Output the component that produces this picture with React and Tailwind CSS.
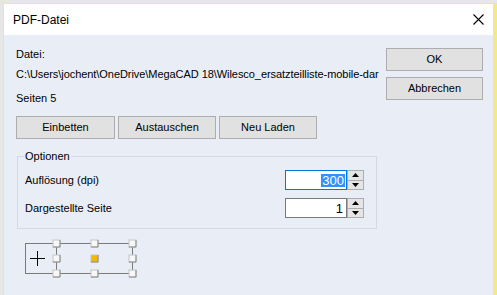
import React from "react";

const font = { fontFamily: '"Liberation Sans", Arial, sans-serif' };

const Btn = ({ children, className = "" }) => (
  <button
    className={
      "h-[23px] bg-[#e1e1e1] border border-[#adadad] text-[11px] text-black leading-none " +
      className
    }
  >
    {children}
  </button>
);

const Spin = () => (
  <div className="w-[17px] h-[20px] border border-[#adadad] bg-[#e5e5e5] flex flex-col">
    <div className="flex-1 flex items-center justify-center border-b border-[#adadad]">
      <svg width="7" height="4" viewBox="0 0 7 4">
        <path d="M0 4 L3.5 0 L7 4 Z" fill="#000" />
      </svg>
    </div>
    <div className="flex-1 flex items-center justify-center">
      <svg width="7" height="4" viewBox="0 0 7 4">
        <path d="M0 0 L3.5 4 L7 0 Z" fill="#000" />
      </svg>
    </div>
  </div>
);

const Handle = ({ x, y, fill = "#f7f7f7" }) => (
  <g>
    <rect x={x - 3.5} y={y - 3.5} width="7" height="7" fill={fill} stroke="#c4c4c4" />
    <path d={`M${x - 3.5} ${y + 3.5} H${x + 3.5} V${y - 3.5}`} stroke="#8a8a8a" fill="none" />
  </g>
);

const Preview = () => (
  // offsets: page x - 20, page y - 236
  <svg width="120" height="44" viewBox="0 0 120 44" className="block">
    <g stroke="#7a7a7a" strokeWidth="1" fill="none" shapeRendering="crispEdges">
      <path d="M5.5 7.5 H112.5 V37.5 H5.5 Z" />
      <path d="M36.5 7.5 V37.5" />
    </g>
    <g stroke="#000" strokeWidth="1" shapeRendering="crispEdges">
      <path d="M10 22.5 H25" />
      <path d="M17.5 15 V30" />
    </g>
    <Handle x={36.5} y={7.5} />
    <Handle x={74.5} y={7.5} />
    <Handle x={112.5} y={7.5} />
    <Handle x={36.5} y={22.5} />
    <Handle x={74.5} y={22.5} fill="#f5b800" />
    <Handle x={112.5} y={22.5} />
    <Handle x={36.5} y={37.5} />
    <Handle x={74.5} y={37.5} />
    <Handle x={112.5} y={37.5} />
  </svg>
);

export default function App() {
  return (
    <div className="w-[497px] h-[295px] bg-[#e6e6e6] pt-[3px] pl-[3px] overflow-hidden" style={font}>
      <div className="h-[292px] border-t border-l border-r-[4px] border-[#f1e98c] flex flex-col">
        <div className="h-[31px] bg-white flex items-center justify-between pl-[9px] pr-[8px] shrink-0">
          <span className="text-[12px] text-black">PDF-Datei</span>
          <svg width="11" height="11" viewBox="0 0 11 11" className="mr-[1px]">
            <path d="M0.5 0.5 L10.5 10.5 M10.5 0.5 L0.5 10.5" stroke="#000" strokeWidth="1.1" />
          </svg>
        </div>

        <div className="flex-1 bg-[#e9eef6] flex text-[11px] text-black">
          <div className="flex-1 min-w-0 pl-[12px] flex flex-col">
            <div className="h-[14px] mt-[12px] leading-[14px]">Datei:</div>
            <div className="h-[14px] mt-[6px] leading-[14px] whitespace-nowrap tracking-[-0.06px]">
              C:\Users\jochent\OneDrive\MegaCAD 18\Wilesco_ersatzteilliste-mobile-dar
            </div>
            <div className="h-[14px] mt-[10px] leading-[14px]">Seiten 5</div>

            <div className="flex gap-[3px] mt-[11px]">
              <Btn className="w-[99px]">Einbetten</Btn>
              <Btn className="w-[98px]">Austauschen</Btn>
              <Btn className="w-[98px]">Neu Laden</Btn>
            </div>

            <fieldset className="mt-[11px] ml-[1px] w-[360px] h-[79px] border border-[#d3dae3] relative">
              <legend className="ml-[6px] px-[1px] leading-[13px]">Optionen</legend>
              <div className="flex items-center justify-between pl-[7px] pr-[12px] mt-[7px]">
                <span>Auflösung (dpi)</span>
                <div className="flex">
                  <div className="w-[62px] h-[20px] bg-white border border-[#0078d7] flex items-center justify-end pr-[1px]">
                    <span className="bg-[#3390ff] text-white px-[1px] leading-[13px] text-[13px]">300</span>
                  </div>
                  <Spin />
                </div>
              </div>
              <div className="flex items-center justify-between pl-[7px] pr-[12px] mt-[8px]">
                <span>Dargestellte Seite</span>
                <div className="flex">
                  <div className="w-[62px] h-[20px] bg-white border border-[#7a7a7a] flex items-center justify-end pr-[3px]">
                    <span className="leading-[13px] text-[13px]">1</span>
                  </div>
                  <Spin />
                </div>
              </div>
            </fieldset>

            <div className="mt-[7px] ml-[4px]">
              <Preview />
            </div>
          </div>

          <div className="w-[97px] mr-[10px] mt-[13px] flex flex-col gap-[6px] shrink-0">
            <Btn className="w-full">OK</Btn>
            <Btn className="w-full">Abbrechen</Btn>
          </div>
        </div>
      </div>
    </div>
  );
}
